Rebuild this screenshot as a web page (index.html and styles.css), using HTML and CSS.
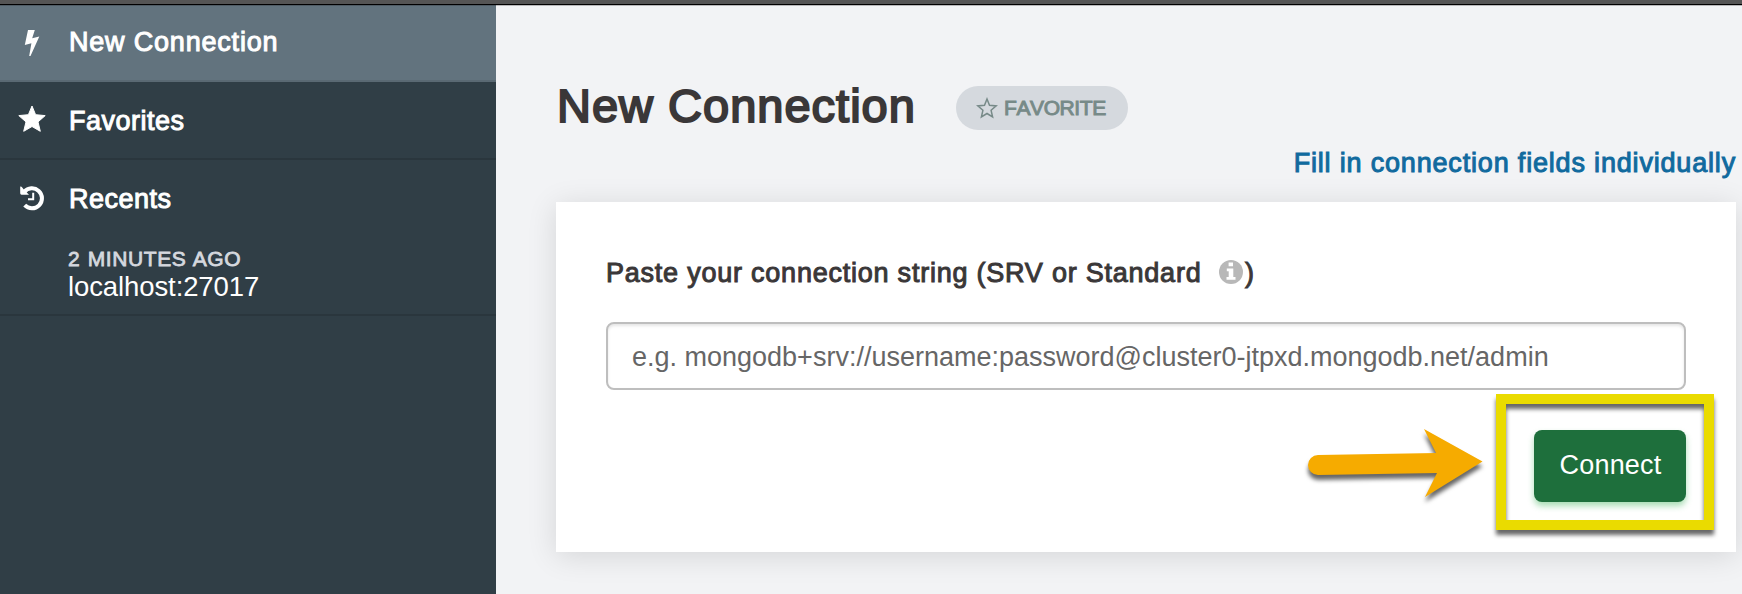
FILE: index.html
```html
<!DOCTYPE html>
<html lang="en">
<head>
<meta charset="utf-8">
<title>New Connection</title>
<link rel="stylesheet" href="styles.css">
</head>
<body>
<div class="titlebar"></div>
<div class="app">
  <nav class="sidebar">
    <div class="nav-item active">
      <svg class="icon" viewBox="0 0 32 32"><path class="solid" d="M12 3H18.800L16.200 11.200L23.300 9.400L14.500 29H13.200L15.400 16.300L8.800 18Z"/></svg>
      <span class="nav-label wide">New Connection</span>
    </div>
    <div class="nav-item">
      <svg class="icon" viewBox="0 0 32 32"><path class="solid round" d="M16 2L19.600 10.700L29.200 11.600L22 17.900L24.300 27.300L16 22.500L7.700 27.300L10 17.900L2.800 11.600L12.400 10.700Z"/></svg>
      <span class="nav-label">Favorites</span>
    </div>
    <section class="recents">
      <div class="nav-item plain">
        <svg class="icon" viewBox="0 0 32 32"><path class="ring" d="M8.300 9.900A10 10 0 1 1 8.700 23.200"/><path class="solid" d="M4.200 4.500Q6 4.500 6 5.300L7.600 7.200L13 12.700H5.500Q4.200 12.700 4.200 11.300Z"/><path class="hand" d="M17.200 10.700V17.200H12"/></svg>
        <span class="nav-label">Recents</span>
      </div>
      <div class="recent">
        <div class="recent-time">2 MINUTES AGO</div>
        <div class="recent-host">localhost:27017</div>
      </div>
    </section>
  </nav>
  <main class="main">
    <header class="header">
      <h1 class="title">New Connection</h1>
      <button class="favorite">
        <svg class="favorite-star" viewBox="0 0 22 22"><path d="M11 2L13.500 8.300L20.200 8.900L15.100 13.300L16.600 20L11 16.500L5.400 20L6.900 13.300L1.800 8.900L8.500 8.300Z"/></svg>
        <span class="favorite-text">FAVORITE</span>
      </button>
    </header>
    <div class="switch"><a class="switch-link">Fill in connection fields individually</a></div>
    <form class="card">
      <label class="field-label"><span class="field-text first">Paste your connection string (SRV or Standard</span><svg class="info" viewBox="0 0 24 24"><circle cx="12" cy="12" r="12"/><path d="M9.600 2.500H14V6.200H9.600ZM7.800 8.500H14.300V17H16.500V19.800H7.500V17H9.700V11.300H7.800Z"/></svg><span class="field-text">)</span></label>
      <input class="field" type="text" placeholder="e.g. mongodb+srv://username:password@cluster0-jtpxd.mongodb.net/admin">
      <div class="actions">
        <svg class="arrow" viewBox="0 0 190 90"><path d="M18 35L136 33L124 9L182.500 41.500L125 77L137 53L18 55A10 10 0 0 1 18 35Z"/></svg>
        <div class="connect-wrap">
          <button class="connect" type="button">Connect</button>
          <div class="highlight"></div>
        </div>
      </div>
    </form>
  </main>
</div>
</body>
</html>
```
FILE: styles.css
```css
* { box-sizing: border-box; }
body {
  margin: 0;
  height: 594px;
  overflow: hidden;
  display: flex;
  flex-direction: column;
  font-family: "Liberation Sans", Arial, sans-serif;
  font-size: 28px;
  background: #f2f3f5;
}
button { border: 0; font-family: inherit; }
.titlebar { height: 5px; flex: none; background: #555; border-bottom: 1px solid #000; }
.app { flex: 1; display: flex; min-height: 0; }

.sidebar {
  width: 496px;
  flex: none;
  background: #303e46;
  color: #fff;
}
.nav-item {
  height: 78px;
  display: flex;
  align-items: center;
  gap: 20px;
  padding-left: 16px;
  border-bottom: 2px solid #2a363d;
}
.nav-item.active {
  height: 77px;
  background: #62737e;
  border-bottom-color: #5a6973;
  box-shadow: inset 0 1px #4f5c65;
}
.nav-item.plain { height: 76px; border: 0; }
.nav-label { padding: 2px 0 0 1px; font-size: 27px; letter-spacing: .5px; -webkit-text-stroke: 1px; }
.nav-label.wide { padding-top: 0; letter-spacing: .8px; }
.icon { width: 32px; height: 32px; flex: none; }
.solid { fill: #fff; }
.round { stroke: #fff; stroke-width: 1; stroke-linejoin: round; }
.ring { fill: none; stroke: #fff; stroke-width: 4; }
.hand { fill: none; stroke: #fff; stroke-width: 2; }
.recents { height: 156px; border-bottom: 2px solid #2a363d; }
.recent { padding: 9px 0 0 68px; line-height: 28px; }
.recent-time { font-size: 21px; color: #d5d8de; letter-spacing: .6px; word-spacing: 1px; -webkit-text-stroke: .8px; }
.recent-host { font-size: 27.500px; letter-spacing: -.1px; }

.main { flex: 1; padding: 58px 6px 0 60px; box-shadow: inset 0 1px #b8b8ba; }
.header { height: 90px; display: flex; align-items: center; }
.title {
  margin: 0;
  width: 400px;
  padding: 0 0 4px 1px;
  font-size: 47px;
  line-height: 84px;
  font-weight: 400;
  letter-spacing: 1px;
  white-space: nowrap;
  color: #3a3738;
  -webkit-text-stroke: 2px;
}
.favorite {
  width: 172px;
  height: 44px;
  display: flex;
  align-items: center;
  gap: 6px;
  padding: 0 0 0 20px;
  border-radius: 22px;
  background: #d5d9de;
  color: #778a88;
}
.favorite-star { width: 22px; height: 22px; fill: none; stroke: #778a88; stroke-width: 1.500; }
.favorite-text { font-size: 21px; letter-spacing: -.4px; font-kerning: none; -webkit-text-stroke: 1px; }
.switch { height: 49px; line-height: 20px; text-align: right; }
.switch-link { color: #116a9e; font-size: 27px; letter-spacing: .82px; -webkit-text-stroke: 1px; }

.card {
  height: 350px;
  padding: 50px 50px 0;
  background: #fff;
  box-shadow: 0 4px 28px rgba(0, 0, 0, .12);
}
.field-label { height: 40px; display: flex; align-items: center; color: #3a3738; }
.field-text { padding-top: 2px; font-size: 27px; letter-spacing: .77px; white-space: pre; -webkit-text-stroke: 1px; }
.field-text.first { width: 613px; }
.info { width: 24px; height: 24px; flex: none; fill: #b8b8b8; }
.info path { fill: #fff; }
.info + .field-text { padding-left: 2px; }
.field {
  display: block;
  width: 1080px;
  height: 68px;
  margin-top: 30px;
  padding: 2px 24px 0;
  border: 2px solid #bebebe;
  border-radius: 8px;
  background: #fff;
  box-shadow: inset 0 2px 3px rgba(0, 0, 0, .1);
  font: 27px "Liberation Sans", Arial, sans-serif;
  letter-spacing: 0;
}
.field::placeholder { color: #666; opacity: 1; }
.actions { display: flex; justify-content: flex-end; align-items: flex-start; }
.arrow {
  width: 190px;
  height: 90px;
  margin: 30px 44px 0 0;
  overflow: visible;
  fill: #f6ab00;
  filter: drop-shadow(0 5px 2px rgba(0, 0, 0, .6));
}
.connect-wrap { position: relative; margin-top: 40px; }
.connect {
  display: block;
  width: 152px;
  height: 72px;
  padding: 0 0 1px 1px;
  border-radius: 8px;
  background: #1e6f3c;
  color: #fff;
  font-size: 27px;
  letter-spacing: .2px;
  box-shadow: 0 4px 6px rgba(40, 170, 70, .4);
}
.highlight {
  position: absolute;
  top: -36px;
  left: -38px;
  width: 218px;
  height: 136px;
  border: 10px solid #eadb00;
  filter: drop-shadow(0 5px 2px rgba(0, 0, 0, .6));
}
```
